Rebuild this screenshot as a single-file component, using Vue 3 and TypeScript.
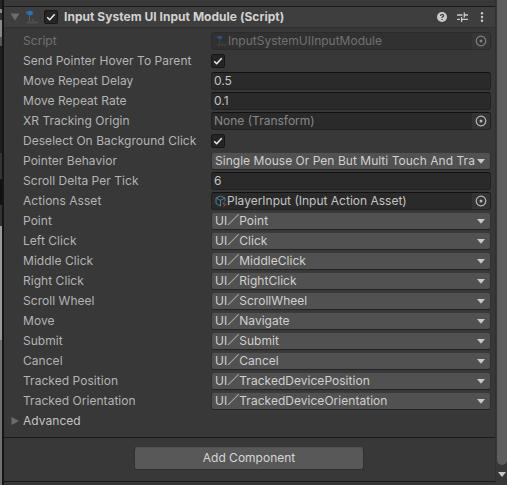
<script setup lang="ts">
type Kind = 'object' | 'check' | 'text' | 'select'
interface Row {
  label: string
  kind: Kind
  value?: string
  icon?: 'script' | 'asset'
  dim?: boolean
  empty?: boolean
}

const rows: Row[] = [
  { label: 'Script', kind: 'object', value: 'InputSystemUIInputModule', icon: 'script', dim: true },
  { label: 'Send Pointer Hover To Parent', kind: 'check' },
  { label: 'Move Repeat Delay', kind: 'text', value: '0.5' },
  { label: 'Move Repeat Rate', kind: 'text', value: '0.1' },
  { label: 'XR Tracking Origin', kind: 'object', value: 'None (Transform)', empty: true },
  { label: 'Deselect On Background Click', kind: 'check' },
  { label: 'Pointer Behavior', kind: 'select', value: 'Single Mouse Or Pen But Multi Touch And Tra' },
  { label: 'Scroll Delta Per Tick', kind: 'text', value: '6' },
  { label: 'Actions Asset', kind: 'object', value: 'PlayerInput (Input Action Asset)', icon: 'asset' },
  { label: 'Point', kind: 'select', value: 'UI／Point' },
  { label: 'Left Click', kind: 'select', value: 'UI／Click' },
  { label: 'Middle Click', kind: 'select', value: 'UI／MiddleClick' },
  { label: 'Right Click', kind: 'select', value: 'UI／RightClick' },
  { label: 'Scroll Wheel', kind: 'select', value: 'UI／ScrollWheel' },
  { label: 'Move', kind: 'select', value: 'UI／Navigate' },
  { label: 'Submit', kind: 'select', value: 'UI／Submit' },
  { label: 'Cancel', kind: 'select', value: 'UI／Cancel' },
  { label: 'Tracked Position', kind: 'select', value: 'UI／TrackedDevicePosition' },
  { label: 'Tracked Orientation', kind: 'select', value: 'UI／TrackedDeviceOrientation' },
]
</script>

<template>
  <div class="window">
    <div class="edge"></div>
    <main class="inspector">
      <header class="head">
        <svg class="fold" viewBox="0 0 10 8"><path d="M0.5 0.5h9L5 7.5z" /></svg>
        <svg class="script-icon" viewBox="0 0 14 15">
          <path class="stick" d="M4.500 5v6M8 9v2" />
          <path class="base" d="M1.500 11.500h11.500v2H1.500z" />
          <path class="ball" d="M1 1.500h2c2-1.500 5-.5 5 1.500S5 6.200 3 4.500L1 3z" />
        </svg>
        <span class="box"><svg viewBox="0 0 12 12"><path d="M2.2 6.2l2.5 2.5 5-5.5" /></svg></span>
        <h1>Input System UI Input Module (Script)</h1>
        <svg class="help" viewBox="0 0 10 10">
          <circle cx="5" cy="5" r="5" />
          <path d="M3.5 4c0-2 3.1-2 3.1-.2C6.6 4.9 5 4.800 5 6" /><path d="M5 7v1" />
        </svg>
        <svg class="sliders" viewBox="0 0 11 10">
          <path d="M0 3h5.500M7.500 3H11M7.300.5v5M0 7.300h3M5 7.300h6M4.600 5v5" />
        </svg>
        <svg class="dots" viewBox="0 0 4 10">
          <circle cx="2" cy="1.200" r="1.200" /><circle cx="2" cy="5" r="1.200" /><circle cx="2" cy="8.800" r="1.200" />
        </svg>
      </header>

      <section class="fields">
        <div v-for="row in rows" :key="row.label" class="row" :class="{ dim: row.dim }">
          <label>{{ row.label }}</label>
          <span v-if="row.kind === 'check'" class="box small">
            <svg viewBox="0 0 12 12"><path d="M2.200 6.200l2.500 2.500 5-5.500" /></svg>
          </span>
          <div v-else class="control" :class="[row.kind, { empty: row.empty }]">
            <svg v-if="row.icon === 'script'" class="script-icon mini" viewBox="0 0 14 15">
              <path class="stick" d="M4.500 5v6M8 9v2" />
              <path class="base" d="M1.500 11.500h11.500v2H1.500z" />
              <path class="ball" d="M1 1.500h2c2-1.500 5-.5 5 1.500S5 6.200 3 4.500L1 3z" />
            </svg>
            <svg v-if="row.icon === 'asset'" class="asset" viewBox="0 0 12 12">
              <path d="M5.500 1L1 3v5.500L5.500 11M5.500 1L10 3v3M1 3l4.500 2.300L10 3M5.500 5.300V11" />
              <path class="spark" d="M9.500 6.500L8 9h2.500L9 11.500" />
            </svg>
            <span class="value">{{ row.value }}</span>
            <span v-if="row.kind === 'object'" class="picker">
              <svg viewBox="0 0 12 12"><circle cx="6" cy="6" r="4.800" /><circle class="dot" cx="6" cy="6" r="1.500" /></svg>
            </span>
            <svg v-if="row.kind === 'select'" class="caret" viewBox="0 0 8 5"><path d="M0 0h8L4 4.800z" /></svg>
          </div>
        </div>
        <div class="row advanced">
          <svg viewBox="0 0 8 8"><path d="M.5 0l7.500 4-7.500 4z" /></svg>
          <label>Advanced</label>
        </div>
      </section>

      <footer><button type="button">Add Component</button></footer>
    </main>
    <aside class="scroll">
      <div class="thumb"></div>
      <svg viewBox="0 0 8 5"><path d="M0 0h8L4 5z" /></svg>
    </aside>
  </div>
</template>

<style>
body { background: #383838; overflow: hidden; }
</style>

<style scoped>
* { box-sizing: border-box; }
svg { display: block; flex: none; }
.window {
  display: flex;
  width: 507px;
  height: 485px;
  background: #383838;
  color: #c4c4c4;
  font: 12px/16px Inter, "Noto Sans CJK JP", sans-serif;
  overflow: hidden;
}
.edge {
  width: 4px;
  flex: none;
  border-right: 2px solid #151515;
  background: linear-gradient(#242424 0 9px, #8a8a8a 9px 13px, #333 13px 20px, #8a8a8a 20px 37px, #555 37px 46px, #1e1e1e 46px 153px, #333 153px 179px, #111 179px 205px, #333 205px 226px, #9a9a98 226px 340px, #70716a 340px);
}
.inspector { width: 491px; flex: none; display: flex; flex-direction: column; }
.head {
  height: 22px;
  flex: none;
  margin-top: 6px;
  border-top: 1px solid #1a1a1a;
  border-bottom: 1px solid #303030;
  background: #3e3e3e;
  display: flex;
  align-items: center;
  padding-left: 6px;
}
.fold { width: 10px; height: 8px; fill: #6c6c6c; }
.script-icon { width: 14px; height: 15px; margin-left: 5px; }
.stick { fill: none; stroke: #565f68; stroke-width: 1; }
.base { fill: #4a5157; }
.ball { fill: #2672c4; }
.box {
  width: 14px;
  height: 14px;
  flex: none;
  margin-left: 5px;
  background: #252525;
  border: 1px solid #171717;
  border-radius: 2px;
}
.box svg { width: 12px; height: 12px; }
.box path { fill: none; stroke: #efefef; stroke-width: 1.500; }
h1 { margin: 0 0 0 6px; font-size: 12px; line-height: 16px; font-weight: 700; letter-spacing: 0.03px; color: #d2d2d2; white-space: nowrap; flex: 1; }
.help { width: 10px; height: 10px; fill: #cacaca; }
.help path { fill: none; stroke: #3a3a3a; stroke-width: 1.200; }
.sliders { width: 11px; height: 10px; margin-left: 10px; fill: none; stroke: #cacaca; stroke-width: 1.300; }
.dots { width: 4px; height: 10px; margin: 0 11px 0 12px; fill: #cacaca; }
.fields { padding: 3px 4px 0 19px; }
.row { height: 20px; display: flex; align-items: center; }
.row label { width: 188px; letter-spacing: 0.04px; white-space: nowrap; color: #b4b4b4; flex: none; }
.row.dim label { color: #717171; }
.small { margin-left: 0; }
.control {
  width: 280px;
  height: 18px;
  display: flex;
  align-items: center;
  border: 1px solid #212121;
  border-top-color: #111;
  border-radius: 3px;
  background: #2a2a2a;
  overflow: hidden;
  padding-left: 2px;
}
.value { flex: 1; min-width: 0; height: 16px; white-space: nowrap; }
.select { background: #515151; border-color: #3a3a3a #303030 #242424; padding-left: 3px; color: #d0d0d0; }
.select .value { letter-spacing: 0.03px; }
.caret { width: 8px; height: 5px; margin: 0 5px 0 2px; fill: #c8c8c8; }
.picker { width: 18px; height: 16px; display: flex; align-items: center; justify-content: center; background: #343434; }
.picker svg { width: 12px; height: 12px; fill: none; stroke: #b8b8b8; stroke-width: 1.200; }
.picker .dot { fill: #b8b8b8; stroke: none; }
.empty { color: #888; }
.dim .control { background: #313131; border-color: #2b2b2b; color: #717171; }
.dim .picker { background: #363636; }
.dim .picker svg { opacity: .6; }
.mini { width: 11px; height: 12px; margin: 0 1px 0 2px; opacity: .5; }
.asset { width: 12px; height: 12px; margin: 0 0 0 1px; fill: none; stroke: #477f9f; stroke-width: 1; }
.spark { stroke: #a44e30; }
.advanced { margin-left: -12px; }
.advanced svg { width: 8px; height: 8px; margin-right: 4px; fill: #6c6c6c; }
.advanced label { color: #c4c4c4; }
footer {
  height: 45px;
  flex: none;
  margin-top: 6px;
  border-top: 1px solid #1a1a1a;
  border-bottom: 1px solid #1a1a1a;
  padding: 9px 0 0 130px;
}
button {
  display: block;
  width: 230px;
  height: 23px;
  padding: 0 0 1px;
  border: 1px solid #303030;
  border-top-color: #505050;
  border-radius: 3px;
  background: #585858;
  color: #d6d6d6;
  font: inherit;
}
.scroll { width: 12px; border-left: 1px solid #303030; display: flex; flex-direction: column; align-items: flex-end; }
.thumb { width: 10px; height: 465px; flex: none; background: #5e5e5e; border-radius: 0 0 5px 5px; }
.scroll svg { width: 8px; height: 5px; margin: 7px 1px 0 0; fill: #c8c8c8; }
</style>
